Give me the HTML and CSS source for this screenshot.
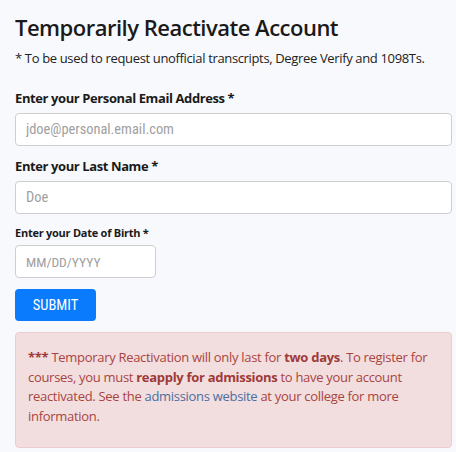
FILE: index.html
```html
<!DOCTYPE html>
<html>
<head>
<meta charset="utf-8">
<link rel="stylesheet" href="styles.css">
</head>
<body>
<main class="page">
  <h1 class="title">Temporarily Reactivate Account</h1>
  <p class="note">* To be used to request unofficial transcripts, Degree Verify and 1098Ts.</p>
  <form class="form">
    <div class="field">
      <label class="label">Enter your Personal Email Address *</label>
      <input class="input" type="text" placeholder="jdoe@personal.email.com">
    </div>
    <div class="field">
      <label class="label">Enter your Last Name *</label>
      <input class="input" type="text" placeholder="Doe">
    </div>
    <div class="field field-small">
      <label class="label label-small">Enter your Date of Birth *</label>
      <input class="input input-date" type="text" placeholder="MM/DD/YYYY">
    </div>
    <button class="submit" type="button">SUBMIT</button>
  </form>
  <div class="alert">
    <p><b>***</b> Temporary Reactivation will only last for <b>two days</b>. To register for courses, you must <b>reapply for admissions</b> to have your account reactivated. See the <a class="link" href="#">admissions website</a> at your college for more information.</p>
  </div>
</main>
</body>
</html>
```
FILE: styles.css
```css
html, body {
  margin: 0;
  padding: 0;
  background: #f8f9fd;
}
body {
  font-family: "Open Sans", sans-serif;
  color: #212121;
}
.page {
  padding: 12px 4px 0 15px;
}
.title {
  margin: 0;
  font-size: 22px;
  font-weight: 600;
  line-height: 30px;
  letter-spacing: -0.5px;
  color: #1a1a1a;
}
.note {
  margin: 6px 0 0;
  font-size: 13px;
  line-height: 20px;
  letter-spacing: -0.35px;
  color: #222;
}
.form {
  margin-top: 21px;
  display: flex;
  flex-direction: column;
  align-items: flex-start;
}
.field {
  display: flex;
  flex-direction: column;
  align-self: stretch;
  margin-bottom: 11px;
}
.label {
  font-size: 13px;
  font-weight: 700;
  line-height: 18px;
  letter-spacing: -0.4px;
  margin-bottom: 6px;
  color: #1a1a1a;
}
.label-small {
  font-size: 11px;
  line-height: 15px;
  letter-spacing: -0.25px;
  margin-bottom: 5px;
}
.field-small {
  margin-bottom: 11px;
}
.input {
  box-sizing: border-box;
  height: 33px;
  border: 1px solid #cfcfcf;
  border-radius: 4px;
  background: #fff;
  padding: 0 10px;
  font-family: Roboto, sans-serif;
  font-stretch: 75%;
  font-size: 14.4px;
  color: #333;
}
.input::placeholder {
  color: #a0a0a0;
}
.input-date {
  width: 141px;
  font-size: 13.5px;
}
.submit {
  box-sizing: border-box;
  width: 81px;
  height: 32px;
  border: none;
  border-radius: 4px;
  background: #0a7bfd;
  color: #fff;
  font-family: Roboto, sans-serif;
  font-stretch: 75%;
  font-size: 14.5px;
  padding: 0;
}
.alert {
  box-sizing: border-box;
  margin-top: 11px;
  height: 116px;
  background: #f2dede;
  border: 1px solid #ebccd1;
  border-radius: 4px;
  padding: 15px 12px 12px 12px;
  color: #a94442;
  font-size: 13px;
  line-height: 19.5px;
  letter-spacing: -0.3px;
}
.alert p {
  margin: 0;
}
.alert b {
  color: #9e3b38;
}
.link {
  color: #4c6e9e;
  text-decoration: none;
}
```
